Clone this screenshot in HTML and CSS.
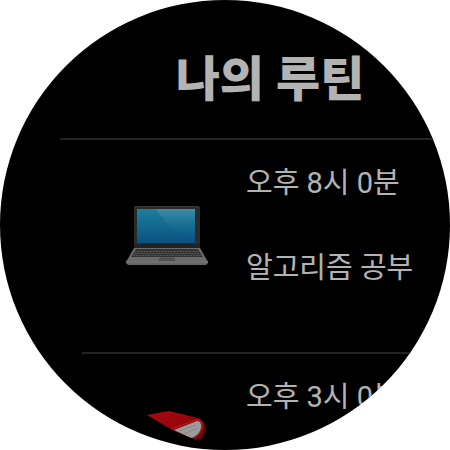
FILE: index.html
```
<!DOCTYPE html>
<html lang="ko">
<head>
<meta charset="utf-8">
<meta name="viewport" content="width=device-width, initial-scale=1">
<title>나의 루틴</title>
<link rel="stylesheet" href="styles.css">
</head>
<body>
<main class="watch">
  <h1 class="title">나의 루틴</h1>
  <ul class="routines">
    <li class="routine">
      <svg class="icon" viewBox="0 0 84 84" aria-hidden="true">
        <defs>
          <linearGradient id="screen" x1="0" y1="0" x2="0" y2="1">
            <stop offset="0" stop-color="#1c7f9f"/>
            <stop offset="0.5" stop-color="#12698f"/>
            <stop offset="1" stop-color="#0a5080"/>
          </linearGradient>
          <linearGradient id="glare" x1="0" y1="0" x2="0" y2="1">
            <stop offset="0" stop-color="#79aab4" stop-opacity="0.35"/>
            <stop offset="1" stop-color="#20738d" stop-opacity="0"/>
          </linearGradient>
        </defs>
        <rect x="9" y="12" width="66" height="43" rx="2" fill="#2b2b2b"/>
        <path d="M10 14q0-1.500 2-1.500h60q2 0 2 1.500" fill="none" stroke="#3b3b3b"/>
        <rect x="12" y="15" width="58" height="34" fill="url(#screen)"/>
        <path d="M31 15h39v26L48 38Z" fill="url(#glare)"/>
        <path d="M9 50h66v4H9z" fill="#222"/>
        <path d="M9 54h66l8 14H1Z" fill="#6c6c6c"/>
        <path d="M11 55h62l5 8H6Z" fill="#333"/>
        <path d="M10 57.500h64M9 59.500h66M8 61.500h68" stroke="#555" stroke-dasharray="2 1"/>
        <path d="M35 64h14l1 3H34Z" fill="#555" stroke="#4a4a4a"/>
        <path d="M1 67h82v2l-2 2H3l-2-2Z" fill="#666"/>
        <path d="M1 68h82" stroke="#7c7c7c"/>
      </svg>
      <div class="details">
        <time class="time" datetime="20:00">오후 8시 0분</time>
        <p class="name">알고리즘 공부</p>
      </div>
    </li>
    <li class="routine">
      <svg class="icon" viewBox="0 0 84 84" aria-hidden="true">
        <defs>
          <linearGradient id="cover" x1="0" y1="0" x2="1" y2="1">
            <stop offset="0" stop-color="#a30a10"/>
            <stop offset="0.7" stop-color="#920208"/>
            <stop offset="1" stop-color="#5c0808"/>
          </linearGradient>
        </defs>
        <path d="M22 7L38 4l6-1L73 10q7 3 7 10 0 7-4 11l-5 1-17-7-12-6Z" fill="url(#cover)"/>
        <path d="M49 22l23-9q5 0 4 7-1 6-9 10l-3-1-13-6Z" fill="#9c9c9c"/>
        <path d="M54 23l17-6M59 26l14-6" stroke="#858585" fill="none"/>
        <path d="M46 21l25-9q7-1 6 7-1 7-8 11" fill="none" stroke="#aa292d"/>
      </svg>
      <div class="details">
        <time class="time" datetime="15:00">오후 3시 0분</time>
      </div>
    </li>
  </ul>
</main>
</body>
</html>
```
FILE: styles.css
```
* {
  box-sizing: border-box;
}

body {
  margin: 0;
  background: #fff;
  font-family: Roboto, "Noto Sans CJK KR", sans-serif;
  color: #fff;
}

.watch {
  aspect-ratio: 1;
  padding-top: 44px;
  overflow: hidden;
  border-radius: 50%;
  background: #000;
}

.title {
  margin: 0 0 22px;
  padding-left: 90px;
  font-size: 48px;
  line-height: 72px;
  font-weight: 900;
  text-align: center;
  opacity: 0.7;
}

.routines {
  margin: 0;
  padding: 0;
  list-style: none;
}

.routine {
  display: grid;
  grid-template-columns: 84px 1fr;
  column-gap: 37px;
  height: 214px;
  padding: 23px 0 0 125px;
  background: linear-gradient(#222, #222) 60px 0 / 100% 2px no-repeat;
}

.routine + .routine {
  background-position-x: 82px;
}

.icon {
  width: 84px;
  height: 84px;
  margin-top: 33px;
}

.details {
  display: flex;
  flex-direction: column;
  gap: 41px;
  font-size: 29px;
  line-height: 44px;
  white-space: nowrap;
  opacity: 0.7;
}

.name {
  margin: 0;
}
```
